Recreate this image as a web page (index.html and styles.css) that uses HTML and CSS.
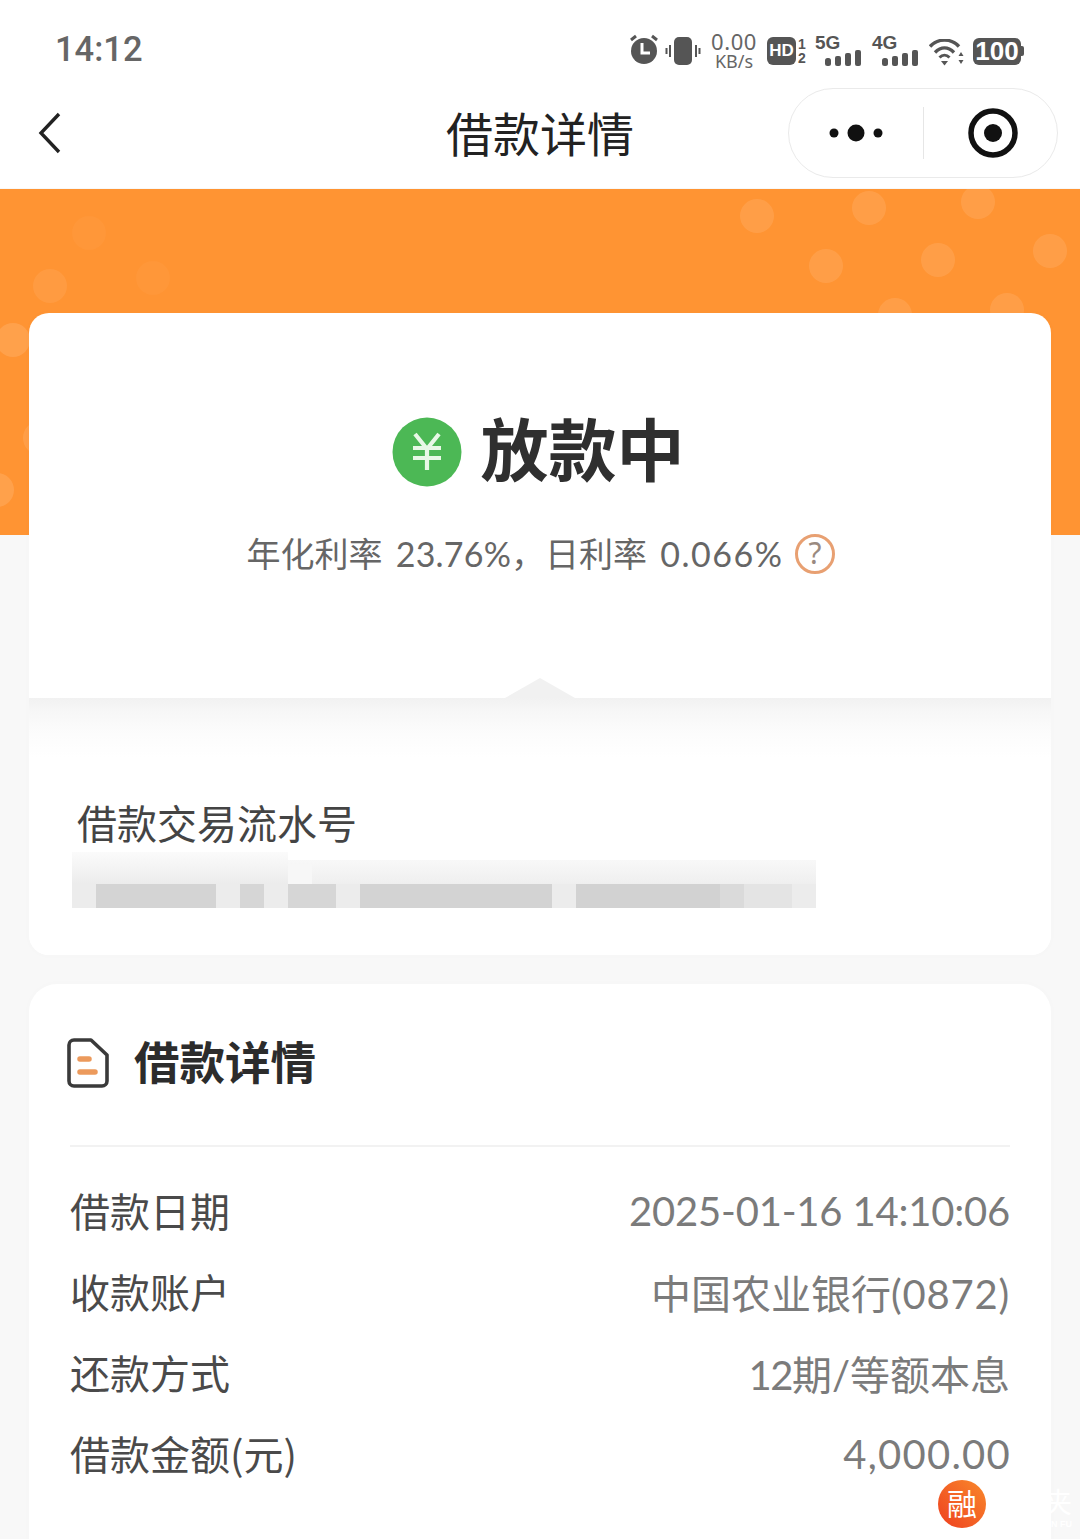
FILE: index.html
```html
<!DOCTYPE html>
<html lang="zh-CN">
<head>
<meta charset="utf-8">
<title>借款详情</title>
<link rel="stylesheet" href="styles.css">
</head>
<body>
<div class="page">
  <header class="status">
    <span class="time">14:12</span>
    <div class="status-icons">
      <svg class="i-alarm" width="30" height="32" viewBox="0 0 30 32"><circle cx="15" cy="18" r="13" fill="#555"/><path d="M13 10v10h8" fill="none" stroke="#fff" stroke-width="3"/><path d="M2 7l5-4M28 7l-5-4" stroke="#555" stroke-width="3"/></svg>
      <svg class="i-vib" width="36" height="28" viewBox="0 0 36 28"><rect x="9" y="0" width="18" height="28" rx="5" fill="#555"/><path d="M5 8v12M1.500 11v6M31 8v12M34.500 11v6" stroke="#555" stroke-width="2"/></svg>
      <div class="speed"><span class="speed-n">0.00</span><span class="speed-u">KB/s</span></div>
      <div class="hd"><span class="hd-box">HD</span><span class="hd-sims"><span>1</span><span>2</span></span></div>
      <div class="sig sig-5"><span class="sig-t">5G</span><svg width="36" height="16" viewBox="0 0 36 16"><rect x="0" y="8" width="6" height="8" rx="2.500"/><rect x="10" y="6" width="6" height="10" rx="2"/><rect x="20" y="3" width="6" height="13" rx="2"/><rect x="30" y="0" width="6" height="16" rx="2"/></svg></div>
      <div class="sig sig-4"><span class="sig-t">4G</span><svg width="36" height="16" viewBox="0 0 36 16"><rect x="0" y="8" width="6" height="8" rx="2.500"/><rect x="10" y="6" width="6" height="10" rx="2"/><rect x="20" y="3" width="6" height="13" rx="2"/><rect x="30" y="0" width="6" height="16" rx="2"/></svg></div>
      <svg class="i-wifi" width="35" height="27" viewBox="0 0 35 27"><path d="M1 7.500C9-1 22-1 30 7.500" fill="none" stroke="#555" stroke-width="3.400"/><path d="M6 13.500C12 7.500 19 7.500 25 13.500" fill="none" stroke="#555" stroke-width="3.400"/><path d="M10.500 18.500C13.500 15.500 17.500 15.500 20.500 18.500" fill="none" stroke="#555" stroke-width="3"/><path d="M12 22h7l-3.500 4.500z" fill="#555"/><path d="M32 13l2.500 4h-5zM32 25l2.500-4h-5z" fill="#555"/></svg>
      <div class="battery"><span class="battery-box">100</span><span class="battery-tip"></span></div>
    </div>
  </header>

  <nav class="nav">
    <svg class="back" width="24" height="42" viewBox="0 0 24 42"><path d="M21 2L3 21l18 19" fill="none" stroke="#222" stroke-width="3.400"/></svg>
    <h1 class="nav-title">借款详情</h1>
    <div class="capsule">
      <svg class="cap-more" width="56" height="20" viewBox="0 0 56 20"><circle cx="6" cy="10" r="4.500" fill="#111"/><circle cx="28" cy="10" r="8.500" fill="#111"/><circle cx="50" cy="10" r="4.500" fill="#111"/></svg>
      <span class="capsule-line"></span>
      <svg class="cap-close" width="50" height="50" viewBox="0 0 50 50"><circle cx="25" cy="25" r="22" fill="none" stroke="#111" stroke-width="5.500"/><circle cx="25" cy="25" r="9" fill="#111"/></svg>
    </div>
  </nav>

  <div class="hero">
    <i class="dot d1"></i><i class="dot d2"></i><i class="dot d3"></i><i class="dot d4"></i><i class="dot d5"></i><i class="dot d6"></i><i class="dot d7"></i><i class="dot d8"></i>
    <i class="dot f1"></i><i class="dot f2"></i><i class="dot f3"></i><i class="dot f4"></i><i class="dot f5"></i><i class="dot f6"></i>
  </div>

  <main class="main">
    <section class="card ticket">
      <div class="ticket-top">
        <div class="state">
          <svg class="state-icon" width="70" height="70" viewBox="0 0 70 70"><circle cx="35" cy="35" r="34.500" fill="#4cb855"/><path d="M23 17l12 15 12-15M21 31h28M21 41h28M35 31v22" fill="none" stroke="#e8f8e6" stroke-width="4.200"/></svg>
          <span class="state-text">放款中</span>
        </div>
        <div class="rate">
          <span>年化利率 <span class="rate-a">23.76%</span>，日利率 <span class="rate-b">0.066%</span></span>
          <svg width="42" height="42" viewBox="0 0 42 42"><circle cx="21" cy="21" r="18.500" fill="none" stroke="#e8a072" stroke-width="3"/><text x="21" y="31" class="rate-q">?</text></svg>
        </div>
        <svg class="notch" width="70" height="20" viewBox="0 0 70 20"><path d="M0 20L35 0l35 20z" fill="#f1f1f1"/></svg>
      </div>
      <div class="ticket-bottom">
        <div class="serial-label">借款交易流水号</div>
        <svg class="mosaic" width="744" height="56" viewBox="0 0 744 56" shape-rendering="crispEdges">
          <defs>
            <linearGradient id="fadeA" x1="0" y1="0" x2="0" y2="1"><stop offset="0" stop-color="#fbfbfb"/><stop offset="1" stop-color="#ececec"/></linearGradient>
            <linearGradient id="fadeB" x1="0" y1="0" x2="0" y2="1"><stop offset="0" stop-color="#f8f8f8"/><stop offset="1" stop-color="#efefef"/></linearGradient>
          </defs>
          <rect x="0" y="0" width="216" height="32" fill="url(#fadeA)"/>
          <rect x="216" y="8" width="528" height="24" fill="url(#fadeB)"/>
          <rect x="216" y="12" width="24" height="20" fill="#f7f7f7"/>
          <rect x="0" y="32" width="744" height="24" fill="#ececec"/>
          <rect x="24" y="32" width="120" height="24" fill="#d4d4d4"/>
          <rect x="168" y="32" width="24" height="24" fill="#d6d6d6"/>
          <rect x="216" y="32" width="48" height="24" fill="#d6d6d6"/>
          <rect x="288" y="32" width="192" height="24" fill="#d3d3d3"/>
          <rect x="504" y="32" width="144" height="24" fill="#d2d2d2"/>
          <rect x="648" y="32" width="24" height="24" fill="#dadada"/>
          <rect x="672" y="32" width="48" height="24" fill="#e4e4e4"/>
        </svg>
      </div>
    </section>

    <section class="card detail">
      <div class="detail-head">
        <svg width="42" height="50" viewBox="0 0 42 50"><path d="M7 2h17l16 15v26a5 5 0 0 1-5 5H7a5 5 0 0 1-5-5V7a5 5 0 0 1 5-5z" fill="#fff" stroke="#3a3a3a" stroke-width="3.600" stroke-linejoin="round"/><path d="M13 21h9M13 34h15" stroke="#ec9a5c" stroke-width="5.500" stroke-linecap="round"/></svg>
        <h2 class="detail-title">借款详情</h2>
      </div>
      <div class="row"><span class="row-k">借款日期</span><span class="row-v v-date">2025-01-16 14:10:06</span></div>
      <div class="row"><span class="row-k">收款账户</span><span class="row-v">中国农业银行<span class="v-acct">(0872)</span></span></div>
      <div class="row"><span class="row-k">还款方式</span><span class="row-v"><span class="v-plan">12</span>期/等额本息</span></div>
      <div class="row"><span class="row-k">借款金额(元)</span><span class="row-v v-amt">4,000.00</span></div>
    </section>
  </main>

  <div class="float-badge">融</div>
  <div class="watermark"><span class="wm-cn">夹</span><span class="wm-en">N FU</span></div>
</div>
</body>
</html>
```
FILE: styles.css
```css
* { box-sizing: border-box; }
html, body { margin: 0; padding: 0; }
body {
  font-family: Lato, "Noto Sans CJK SC", "Noto Sans", sans-serif;
  background: #f8f8f8;
}
.page {
  position: relative;
  width: 1080px;
  height: 1539px;
  overflow: hidden;
  background: #f8f8f8;
}

/* status bar */
.status {
  height: 88px;
  background: #fff;
  display: flex;
  align-items: center;
  justify-content: space-between;
  padding: 8px 56px 0;
  color: #555;
}
.time {
  font-family: Roboto, sans-serif;
  font-size: 34.500px;
  font-weight: 500;
  color: #666;
  margin-top: 2px;
  margin-left: -1px;
}
.status-icons {
  display: flex;
  align-items: center;
  height: 40px;
  margin-top: 6px;
}
.i-alarm { margin-right: 6px; margin-top: -4px; }
.i-vib { margin-right: 10px; }
.speed {
  display: flex;
  flex-direction: column;
  align-items: center;
  width: 46px;
  font-family: "Noto Sans", sans-serif;
  color: #666;
  margin-right: 10px;
  margin-top: -3px;
}
.speed-n { font-size: 22px; line-height: 22px; letter-spacing: 0.6px; }
.speed-u { font-size: 18px; line-height: 18px; }
.hd { display: flex; align-items: center; margin-right: 7px; }
.hd-box {
  width: 29px;
  height: 28px;
  border-radius: 6px;
  background: #555;
  color: #fff;
  font: 800 17px/28px "Liberation Sans", sans-serif;
  text-align: center;
}
.hd-sims {
  display: flex;
  flex-direction: column;
  width: 12px;
  align-items: center;
  font: 700 14px/14px "Liberation Sans", sans-serif;
  color: #555;
}
.sig {
  position: relative;
  width: 46px;
  height: 30px;
  display: flex;
  align-items: flex-end;
  justify-content: flex-end;
}
.sig svg { fill: #555; display: block; }
.sig-t {
  position: absolute;
  left: 0;
  top: -3px;
  font: 700 19px/20px "Liberation Sans", sans-serif;
  color: #555;
}
.sig-5 { margin-right: 11px; }
.sig-4 { margin-right: 11px; }
.i-wifi { margin-right: 9px; margin-top: 2px; }
.battery { display: flex; align-items: center; }
.battery-box {
  width: 48px;
  height: 27px;
  border-radius: 6px;
  background: #555;
  color: #fff;
  font: 700 26px/27px "Liberation Sans", sans-serif;
  text-align: center;
}
.battery-tip { width: 3px; height: 10px; background: #555; border-radius: 0 2px 2px 0; }

/* nav */
.nav {
  height: 100px;
  background: #fff;
  display: grid;
  grid-template-columns: 1fr auto 1fr;
  align-items: center;
  padding: 0 22px 10px 22px;
}
.back { display: block; margin-top: -1px; margin-left: 16px; }
.nav-title {
  margin: -4px 0 0;
  font-family: "Noto Sans CJK SC", sans-serif;
  font-size: 47px;
  font-weight: 400;
  line-height: 60px;
  color: #222;
}
.capsule {
  justify-self: end;
  width: 270px;
  height: 90px;
  border: 1px solid #eaeaea;
  border-radius: 45px;
  display: flex;
  align-items: center;
  padding-left: 39px;
  background: #fff;
  margin-bottom: 1px;
}
.capsule-line { width: 1px; height: 52px; background: #e6e6e6; margin-left: 39px; }
.cap-close { margin-left: 44px; }

/* hero */
.hero {
  position: absolute;
  left: 0;
  top: 189px;
  width: 1080px;
  height: 346px;
  background: #ff9433;
  overflow: hidden;
}
.dot {
  position: absolute;
  width: 34px;
  height: 34px;
  border-radius: 50%;
  background: rgba(255, 255, 255, 0.1);
}
.d1 { left: 740px; top: 10px; }
.d2 { left: 852px; top: 2px; }
.d3 { left: 961px; top: -4px; }
.d4 { left: 1033px; top: 45px; }
.d5 { left: 921px; top: 54px; }
.d6 { left: 809px; top: 60px; }
.d7 { left: 878px; top: 109px; }
.d8 { left: 990px; top: 104px; }
.f1 { left: 72px; top: 27px; background: rgba(255,255,255,.03); }
.f2 { left: 33px; top: 80px; background: rgba(255,255,255,.07); }
.f3 { left: 136px; top: 72px; background: rgba(255,255,255,.03); }
.f4 { left: -4px; top: 134px; background: rgba(255,255,255,.12); }
.f5 { left: -20px; top: 284px; background: rgba(255,255,255,.12); }
.f6 { left: 23px; top: 232px; background: rgba(255,255,255,.1); }

/* main */
.main {
  position: relative;
  padding: 125px 29px 0;
  display: flex;
  flex-direction: column;
  gap: 29px;
}
.card {
  background: #fff;
  border-radius: 20px;
  box-shadow: 0 0 10px rgba(0, 0, 0, 0.015);
}
.ticket-top {
  position: relative;
  height: 385px;
  padding-top: 92px;
  display: flex;
  flex-direction: column;
  align-items: center;
}
.state {
  display: flex;
  align-items: center;
  gap: 18px;
  margin-right: 3px;
  height: 84px;
}
.state-icon { display: block; margin-top: 10px; }
.state-text {
  font-family: "Noto Sans CJK SC", sans-serif;
  font-size: 68px;
  font-weight: 700;
  line-height: 84px;
  color: #2f2f2f;
}
.rate {
  display: flex;
  align-items: center;
  gap: 11px;
  margin-top: 41px;
  margin-left: 3px;
  font-size: 34px;
  line-height: 48px;
  color: #666;
  word-spacing: 4.500px;
}
.rate-a { letter-spacing: 0.2px; }
.rate-b { letter-spacing: 1.500px; }
.rate-q { font-size: 30px; fill: #9a8a80; text-anchor: middle; font-family: "Noto Sans", sans-serif; }
.notch { position: absolute; left: 476px; bottom: 0; display: block; }
.ticket-bottom {
  height: 257px;
  padding: 96px 48px 0 43px;
  background: linear-gradient(#f1f1f1 0, #f7f7f7 14px, #fcfcfc 36px, #fff 60px);
  border-radius: 0 0 20px 20px;
}
.serial-label {
  font-family: "Noto Sans CJK SC", sans-serif;
  font-size: 40px;
  line-height: 56px;
  color: #444;
  margin-left: 5px;
}
.mosaic { display: block; margin-top: 2px; }
.detail { padding: 0 41px 40px; height: 600px; border-radius: 28px; }
.detail-head {
  display: flex;
  align-items: center;
  gap: 25px;
  height: 163px;
  border-bottom: 2px solid #f2f2f2;
  padding: 0 0 6px;
}
.detail-head svg { display: block; margin-left: -3px; margin-top: 2px; }
.detail-title {
  margin: -4px 0 0;
  font-family: "Noto Sans CJK SC", sans-serif;
  font-size: 45.500px;
  font-weight: 700;
  line-height: 60px;
  color: #2c2c2c;
}
.row {
  display: flex;
  justify-content: space-between;
  align-items: center;
  height: 81px;
  font-size: 40px;
}
.detail-head + .row { margin-top: 22px; }
.row-k { color: #4a4a4a; font-family: "Noto Sans CJK SC", sans-serif; }
.row-v { color: #7b7b7b; margin-top: 3px; }
.v-date { letter-spacing: -0.2px; }
.v-acct { letter-spacing: 0.8px; }
.v-plan { letter-spacing: -1.500px; }
.v-amt { letter-spacing: 1.250px; margin-right: -1px; }

/* floats */
.float-badge {
  position: absolute;
  left: 938px;
  top: 1480px;
  width: 48px;
  height: 48px;
  border-radius: 50%;
  background: linear-gradient(45deg, #ee3f1f, #f9892b);
  color: #fff;
  font-family: "Noto Sans CJK SC", sans-serif;
  font-size: 30px;
  line-height: 44px;
  text-align: center;
}
.watermark {
  position: absolute;
  left: 1038px;
  top: 1484px;
  width: 34px;
  display: flex;
  flex-direction: column;
  align-items: flex-end;
  color: #fff;
  font-family: "Noto Sans CJK SC", sans-serif;
}
.wm-cn { font-size: 28px; line-height: 34px; }
.wm-en { font: 700 9px/12px "Liberation Sans", sans-serif; }
```
